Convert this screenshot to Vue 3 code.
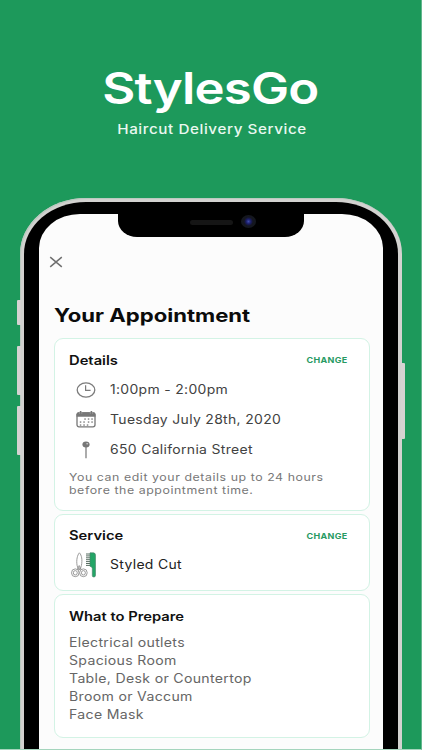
<script setup>
const details = [
  { icon: 'clock', text: '1:00pm - 2:00pm' },
  { icon: 'calendar', text: 'Tuesday July 28th, 2020' },
  { icon: 'pin', text: '650 California Street' }
]

const prepare = [
  'Electrical outlets',
  'Spacious Room',
  'Table, Desk or Countertop',
  'Broom or Vaccum',
  'Face Mask'
]

// dots of the calendar icon
const dots = [
  [9, 8], [12.5, 8], [16, 8],
  [4.5, 11], [8, 11], [12.5, 11], [16, 11],
  [4.5, 14], [8, 14], [11.5, 14]
]
</script>

<template>
  <div class="page">
    <header class="hero">
      <h1 class="brand"><span class="wide">StylesGo</span></h1>
      <p class="tagline"><span class="wide">Haircut Delivery Service</span></p>
    </header>

    <div class="phone">
      <i class="side-button mute"></i>
      <i class="side-button volume-up"></i>
      <i class="side-button volume-down"></i>
      <i class="side-button power"></i>

      <div class="bezel">
        <div class="notch">
          <span class="speaker"></span>
          <span class="camera"></span>
        </div>

        <main class="screen">
          <svg class="close" width="14" height="12" viewBox="0 0 14 12">
            <path d="M1.2 1.2L12.8 10.8M12.8 1.2L1.2 10.8" stroke="#6f6f6f" stroke-width="1.5" fill="none" />
          </svg>

          <h2 class="title"><span class="wide">Your Appointment</span></h2>

          <section class="card details">
            <div class="card-head">
              <h3><span class="wide">Details</span></h3>
              <a class="change"><span class="wide">CHANGE</span></a>
            </div>
            <div class="rows">
              <div v-for="item in details" :key="item.icon" class="row">
                <div class="icon">
                  <svg v-if="item.icon === 'clock'" width="20" height="16" viewBox="0 0 20 16">
                    <ellipse cx="10" cy="8" rx="8.8" ry="7.1" fill="none" stroke="#7b7b7b" stroke-width="1.3" />
                    <path d="M9.6 3.2V8.4H14.6" fill="none" stroke="#7b7b7b" stroke-width="1.2" />
                  </svg>
                  <svg v-else-if="item.icon === 'calendar'" width="20" height="17" viewBox="0 0 20 17">
                    <rect x="1" y="1.8" width="18" height="14" rx="2" fill="#fff" stroke="#777" stroke-width="1.3" />
                    <path d="M.5 5.8V3.5Q.5 1.3 2.8 1.3H17.2Q19.5 1.3 19.5 3.5V5.8Z" fill="#777" />
                    <path d="M4.6 0V3.2M15.4 0V3.2" stroke="#777" stroke-width="1.6" />
                    <path d="M3.5 1V3M5.8 1V3M14.3 1V3M16.6 1V3" stroke="#bbb" stroke-width=".4" />
                    <rect v-for="(d, i) in dots" :key="i" :x="d[0] - 0.7" :y="d[1] - 0.6" width="1.5" height="1.3" fill="#777" />
                  </svg>
                  <svg v-else width="20" height="18" viewBox="0 0 20 18">
                    <path d="M10 5V17.3" stroke="#888" stroke-width="1.4" />
                    <ellipse cx="10" cy="3.5" rx="3.6" ry="3" fill="#777" />
                    <ellipse cx="11.2" cy="2.7" rx="1" ry=".7" fill="#ccc" />
                  </svg>
                </div>
                <span class="wide">{{ item.text }}</span>
              </div>
            </div>
            <p class="note">
              <span class="wide">You can edit your details up to 24 hours<br />before the appointment time.</span>
            </p>
          </section>

          <section class="card service">
            <div class="card-head">
              <h3><span class="wide">Service</span></h3>
              <a class="change"><span class="wide">CHANGE</span></a>
            </div>
            <div class="row cut">
              <div class="icon">
                <svg width="28" height="26" viewBox="0 0 28 26">
                  <g fill="#fff" stroke="#909090" stroke-width=".9">
                    <path d="M9.4.8C11.6 3 12.6 8 11.4 13.5L10.2 17.5L8.4 17.5L7.1 13.5C6.1 8 7.4 3 9.4.8Z" />
                    <path d="M9.2 13.5L7 18.2M9.2 13.5L11.5 18.2" />
                    <ellipse cx="5.3" cy="20.8" rx="3.8" ry="3.9" />
                    <ellipse cx="5.3" cy="20.8" rx="2" ry="2.2" />
                    <ellipse cx="13.4" cy="20.8" rx="3.8" ry="3.9" />
                    <ellipse cx="13.4" cy="20.8" rx="2" ry="2.2" />
                    <circle cx="9.3" cy="16.5" r=".7" />
                  </g>
                  <path d="M16 2H21M16 3.9H21M16 5.8H21M16 7.7H21M16 9.6H21M16 11.5H21M16 13.4H21" stroke="#5b6f64" stroke-width="1" />
                  <path d="M20 .8H23.5Q25.8 1 25.5 4V23.5Q25.4 25 23.8 25Q22.2 25 22.3 23.5V16.5Q22.2 14.5 20 14.3Z" fill="#23a566" stroke="#4a8068" stroke-width=".6" />
                </svg>
              </div>
              <span class="wide">Styled Cut</span>
            </div>
          </section>

          <section class="card prepare">
            <h3><span class="wide">What to Prepare</span></h3>
            <ul>
              <li v-for="item in prepare" :key="item"><span class="wide">{{ item }}</span></li>
            </ul>
          </section>
        </main>
      </div>
    </div>
  </div>
</template>

<style>
body {
  background: #1d995b;
}
</style>

<style scoped>
.page {
  box-sizing: border-box;
  width: 422px;
  height: 750px;
  overflow: hidden;
  background: #1d995b;
  border-right: 1px solid #62b68d;
  border-bottom: 1px solid #a5d5bd;
  font-family: Inter, "Liberation Sans", sans-serif;
}

h1,
h2,
h3,
p,
ul {
  margin: 0;
  padding: 0;
  list-style: none;
}

/* expanded lettering */
.wide {
  display: inline-block;
  white-space: nowrap;
  transform: scaleX(1.09);
  transform-origin: 0 50%;
}

.hero {
  box-sizing: border-box;
  height: 198px;
  padding-top: 62px;
  color: #fff;
  text-align: center;
}

.hero .wide {
  transform: scaleX(1.17);
  transform-origin: 50% 50%;
}

.brand {
  font-size: 43.5px;
  line-height: 52px;
  font-weight: 600;
  letter-spacing: -0.7px;
}

.tagline {
  margin-top: 6px;
  padding-left: 4px;
  font-size: 13px;
  line-height: 18px;
  font-weight: 500;
  letter-spacing: 0.5px;
  color: #eaf8f0;
}

.phone {
  position: relative;
  box-sizing: border-box;
  width: 382px;
  height: 640px;
  margin-left: 20px;
  padding: 4px 4px 0;
  border-radius: 66px 66px 0 0 / 56px 56px 0 0;
  background: #d3d2d0;
  box-shadow: inset 1px 1px 1px #b8c9bf;
}

.bezel {
  position: relative;
  box-sizing: border-box;
  height: 100%;
  padding: 12px 15px 0;
  border-radius: 62px 62px 0 0 / 52px 52px 0 0;
  background: #000;
}

.side-button {
  position: absolute;
  left: -3px;
  width: 4px;
  border-radius: 1px 0 0 1px;
  background: #d6d3d2;
}

.mute {
  top: 102px;
  height: 25px;
}

.volume-up {
  top: 148px;
  height: 49px;
}

.volume-down {
  top: 208px;
  height: 49px;
}

.power {
  left: auto;
  right: -3px;
  top: 165px;
  height: 76px;
  border-radius: 0 1px 1px 0;
}

.notch {
  position: absolute;
  top: 8px;
  left: 94px;
  display: flex;
  box-sizing: border-box;
  width: 186px;
  height: 26.5px;
  padding: 5px 0 0 72px;
  border-radius: 0 0 19px 19px / 0 0 16px 16px;
  background: #000;
}

.speaker {
  width: 43px;
  height: 5px;
  margin-top: 4.5px;
  border-radius: 3px;
  background: #151515;
}

.camera {
  width: 15px;
  height: 13px;
  margin-left: 8px;
  border-radius: 50%;
  background: radial-gradient(circle, #3e4cae 0, #191b63 25%, #14161f 45%, #151a1e 100%);
}

.screen {
  box-sizing: border-box;
  height: 100%;
  padding: 42px 13.5px 0 15px;
  border-radius: 41px 41px 0 0 / 34px 34px 0 0;
  background: #fcfcfc;
}

.close {
  display: block;
  margin-left: -5px;
}

.title {
  margin: 35px 0 11px;
  font-size: 18.2px;
  line-height: 24px;
  font-weight: 700;
  color: #0b0b0b;
}

.title .wide {
  transform: scaleX(1.215);
}

.card {
  box-sizing: border-box;
  margin-bottom: 3.4px;
  padding: 13px 21px 0 14px;
  border: 1px solid #d3f3e5;
  border-radius: 9px;
  background: #fff;
}

.details {
  height: 172.6px;
  padding-top: 14px;
}

.service {
  height: 77px;
}

.prepare {
  height: 144px;
  padding-top: 14px;
}

.card-head {
  display: flex;
  justify-content: space-between;
}

h3 {
  font-size: 12.5px;
  line-height: 16px;
  font-weight: 600;
  color: #111;
}

h3 .wide {
  transform: scaleX(1.18);
}

.change {
  font-size: 8px;
  line-height: 16px;
  font-weight: 700;
  letter-spacing: 0.3px;
  color: #279a63;
}

.change .wide {
  transform: scaleX(1.12);
  transform-origin: 100% 50%;
}

.details .change {
  line-height: 14px;
}

.rows {
  margin-top: 5px;
}

.row {
  display: flex;
  align-items: center;
  height: 30px;
  font-size: 12.8px;
  color: #424242;
  letter-spacing: 0.3px;
}

.icon {
  display: flex;
  box-sizing: border-box;
  width: 41px;
  padding: 1px 0 0 6.5px;
}

.cut {
  height: 26px;
  margin-top: 8px;
  color: #222;
}

.cut .icon {
  padding: 0 0 0 1px;
}

.note {
  margin-top: 7px;
  font-size: 10.8px;
  line-height: 13px;
  letter-spacing: 0.5px;
  color: #777;
}

.note .wide {
  transform: scaleX(1.142);
}

.prepare ul {
  margin-top: 9px;
}

li {
  font-size: 12.8px;
  line-height: 18px;
  letter-spacing: 0.3px;
  color: #666;
}

li .wide {
  display: block;
  transform: scaleX(1.1);
}
</style>
